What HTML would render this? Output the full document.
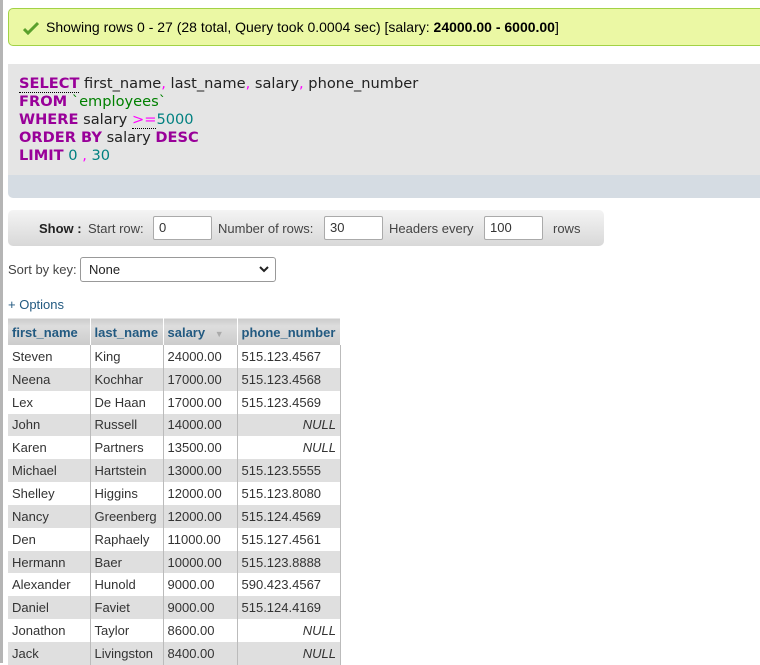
<!DOCTYPE html>
<html><head><style>
body{margin:0;width:760px;height:663px;overflow:hidden;background:#fff;font-family:"Liberation Sans",Arial,sans-serif;position:relative;color:#222}
.lb{position:absolute;left:0;top:0;width:3px;height:663px;background:#b5b5b5}
.ok{position:absolute;left:8px;top:8px;width:760px;background:#ebf8a4;border:1px solid #a2d246;border-radius:5px;font-size:14px;line-height:36px;box-sizing:border-box;height:38px}
.ok span.t{position:absolute;left:37px;top:0;color:#000}
.sql{position:absolute;left:8px;top:64px;width:760px;height:111px;background:#e5e5e5;font-family:"DejaVu Sans",sans-serif;font-size:14.6px;line-height:18px;padding:11px 0 0 11px;box-sizing:border-box;color:#222}
.sqlb{position:absolute;left:8px;top:175px;width:760px;height:23px;background:#d5dce3;border-radius:0 0 0 5px}
.k{color:#990099;font-weight:bold}
.p{color:#ff00ff}
.n{color:#008080}
.s{color:#008000}
.show{position:absolute;left:8px;top:210px;width:596px;height:36px;border-radius:5px;background:linear-gradient(#f4f4f4,#d8d8d8);font-size:13px;color:#444}
.show span{position:absolute;top:11px}
.in{position:absolute;top:6px;height:24px;background:#fff;border:1px solid #aaa;border-radius:2px;box-sizing:border-box;font-size:13px;line-height:22px;padding-left:5px;color:#333}
.sort{position:absolute;left:8px;top:262px;font-size:13px;color:#444}
.sel{position:absolute;left:80px;top:257px;width:196px;height:25px;border:1px solid #999;border-radius:3px;box-sizing:border-box;font-size:13px;line-height:23px;padding-left:8px;color:#222;background:#fff}
.opt{position:absolute;left:8px;top:297px;font-size:13px;color:#235a81}
table{position:absolute;left:8px;top:314px;border-collapse:collapse;font-size:13px;width:333px}
th{background:linear-gradient(#fff 0,#fff 4px,#ccc 5px,#ddd 12px,#ccc);color:#235a81;font-weight:bold;text-align:left;height:31px;padding:5px 4px 0;box-sizing:border-box;border-right:1px solid #fff}
tr.r{height:22.85px}
td{padding:0 4px;border-right:1px solid #bbb;color:#333;white-space:nowrap}
tr:nth-child(even) td{background:#fff}
tr:nth-child(odd) td{background:#dfdfdf}
td.ph{border-left:1px solid #f6c48a;}
td.nu{text-align:right;font-style:italic}
</style></head><body>
<div class="lb"></div>
<div class="ok"><svg style="position:absolute;left:14px;top:12px" width="16" height="14" viewBox="0 0 16 14"><path d="M1 8 L5 12 L15 2" stroke="#5aa02c" stroke-width="3" fill="none"/></svg><span class="t">Showing rows 0 - 27 (28 total, Query took 0.0004 sec) [salary: <b>24000.00 - 6000.00</b>]</span></div>
<div class="sql"><span class="k" style="border-bottom:1px dotted #000">SELECT</span> first_name<span class="p">,</span> last_name<span class="p">,</span> salary<span class="p">,</span> phone_number<br><span class="k">FROM</span> <span class="s">`employees`</span><br><span class="k">WHERE</span> salary <span class="p" style="border-bottom:1px dotted #000">&gt;=</span><span class="n">5000</span><br><span class="k">ORDER BY</span> salary <span class="k">DESC</span><br><span class="k">LIMIT</span> <span class="n">0</span> <span class="p">,</span> <span class="n">30</span></div>
<div class="sqlb"></div>
<div class="show"><span style="left:31px;font-weight:bold;color:#222">Show :</span><span style="left:80px">Start row:</span><div class="in" style="left:145px;width:59px">0</div><span style="left:210px">Number of rows:</span><div class="in" style="left:316px;width:59px">30</div><span style="left:381px">Headers every</span><div class="in" style="left:476px;width:59px">100</div><span style="left:545px">rows</span></div>
<div class="sort">Sort by key:</div>
<div class="sel">None<svg style="position:absolute;right:6px;top:8px" width="10" height="7" viewBox="0 0 10 7"><path d="M1 1 L5 5 L9 1" stroke="#222" stroke-width="2" fill="none"/></svg></div>
<div class="opt">+ Options</div>
<table>
<tr><th style="width:82px">first_name</th><th style="width:73px">last_name</th><th style="width:74px">salary <span style="color:#aaa;font-size:9px;margin-left:6px">▼</span></th><th>phone_number</th></tr>
<tr class="r"><td>Steven</td><td>King</td><td>24000.00</td><td class="ph">515.123.4567</td></tr>
<tr class="r"><td>Neena</td><td>Kochhar</td><td>17000.00</td><td class="ph">515.123.4568</td></tr>
<tr class="r"><td>Lex</td><td>De Haan</td><td>17000.00</td><td class="ph">515.123.4569</td></tr>
<tr class="r"><td>John</td><td>Russell</td><td>14000.00</td><td class="ph nu">NULL</td></tr>
<tr class="r"><td>Karen</td><td>Partners</td><td>13500.00</td><td class="ph nu">NULL</td></tr>
<tr class="r"><td>Michael</td><td>Hartstein</td><td>13000.00</td><td class="ph">515.123.5555</td></tr>
<tr class="r"><td>Shelley</td><td>Higgins</td><td>12000.00</td><td class="ph">515.123.8080</td></tr>
<tr class="r"><td>Nancy</td><td>Greenberg</td><td>12000.00</td><td class="ph">515.124.4569</td></tr>
<tr class="r"><td>Den</td><td>Raphaely</td><td>11000.00</td><td class="ph">515.127.4561</td></tr>
<tr class="r"><td>Hermann</td><td>Baer</td><td>10000.00</td><td class="ph">515.123.8888</td></tr>
<tr class="r"><td>Alexander</td><td>Hunold</td><td>9000.00</td><td class="ph">590.423.4567</td></tr>
<tr class="r"><td>Daniel</td><td>Faviet</td><td>9000.00</td><td class="ph">515.124.4169</td></tr>
<tr class="r"><td>Jonathon</td><td>Taylor</td><td>8600.00</td><td class="ph nu">NULL</td></tr>
<tr class="r"><td>Jack</td><td>Livingston</td><td>8400.00</td><td class="ph nu">NULL</td></tr>
</table>
</body></html>
